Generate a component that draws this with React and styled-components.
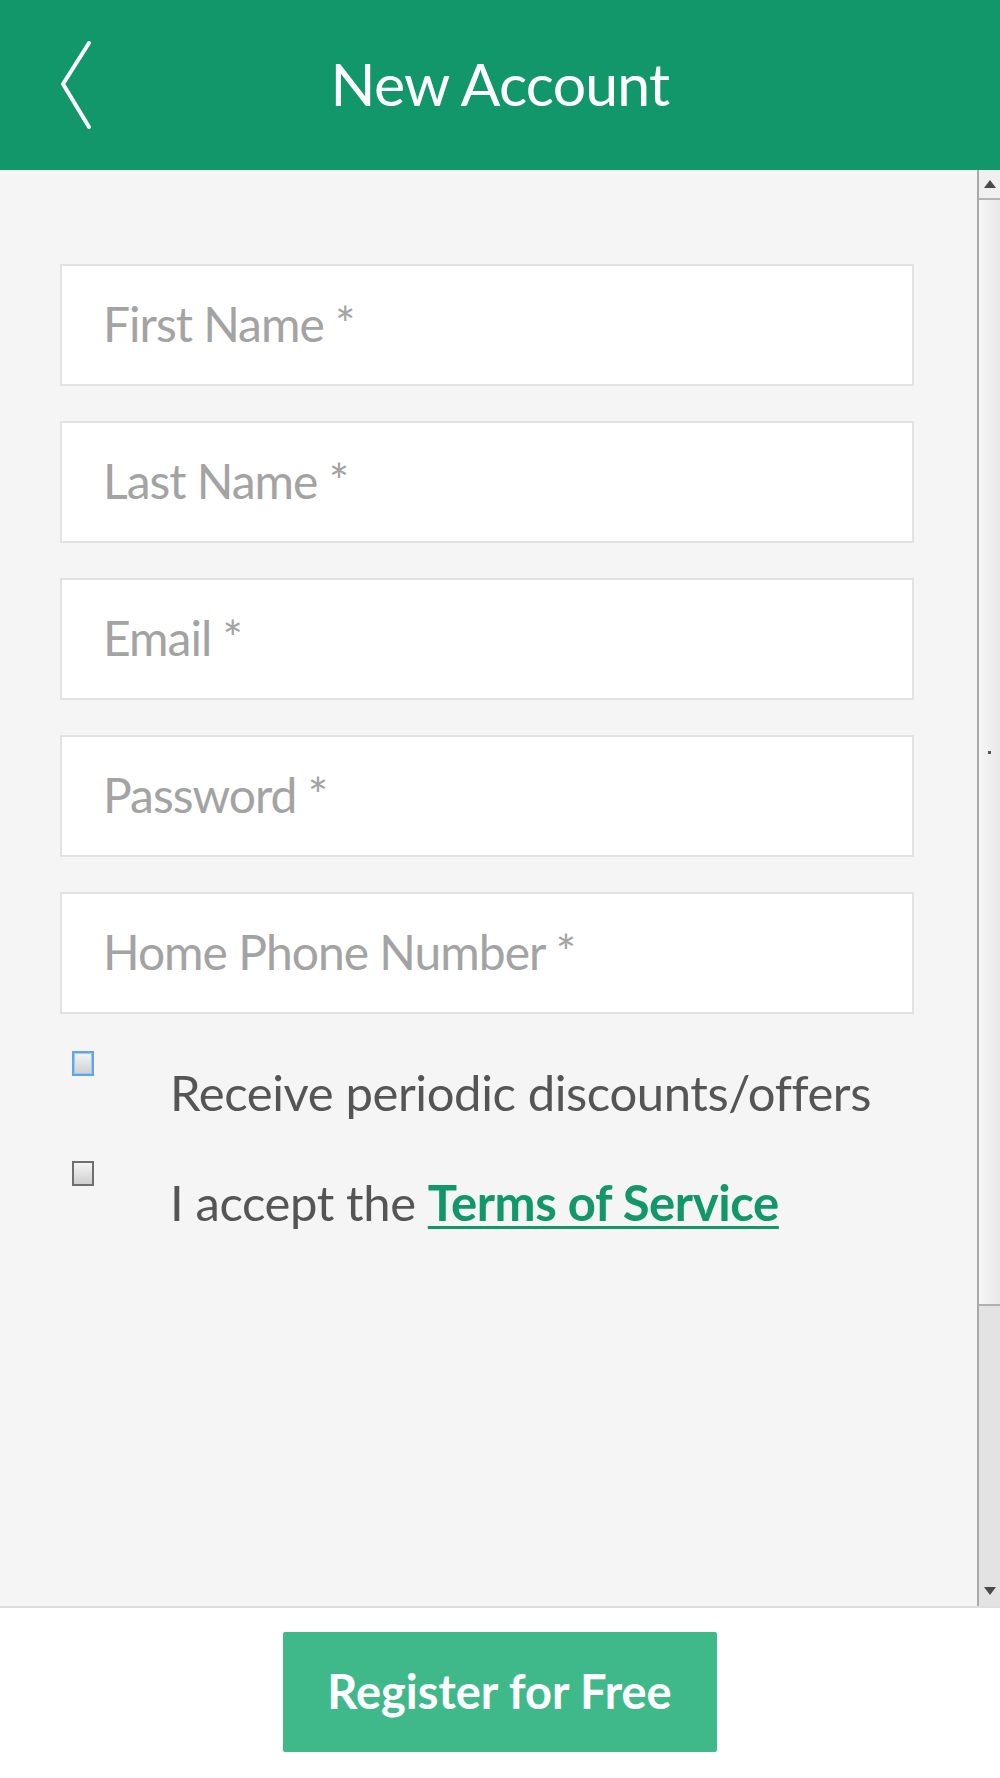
import styled, { createGlobalStyle } from "styled-components";

const GlobalStyle = createGlobalStyle`
    html, body {
        margin: 0;
        padding: 0;
        background: #ffffff;
    }
    * {
        box-sizing: border-box;
    }
`;

const fields = [
    "First Name *",
    "Last Name *",
    "Email *",
    "Password *",
    "Home Phone Number *",
];

export default function App() {
    return (
        <>
            <GlobalStyle />
            <Page>
                <Header>
                    <BackButton aria-label="Back">
                        <svg width="34" height="92" viewBox="0 0 34 92">
                            <polyline
                                points="30,3 4,44 30,87"
                                fill="none"
                                stroke="#ffffff"
                                strokeWidth="4"
                                strokeLinecap="round"
                                strokeLinejoin="round"
                            />
                        </svg>
                    </BackButton>
                    <Title>New Account</Title>
                </Header>

                <Body>
                    <Content>
                        <Form>
                            {fields.map((f) => (
                                <Field key={f} placeholder={f} />
                            ))}
                            <Options>
                                <Option>
                                    <Check $focused />
                                    <Label>Receive periodic discounts/offers</Label>
                                </Option>
                                <Option>
                                    <Check />
                                    <Label>
                                        I accept the <TermsLink href="#">Terms of Service</TermsLink>
                                    </Label>
                                </Option>
                            </Options>
                        </Form>
                    </Content>
                    <Scrollbar>
                        <ArrowButton>
                            <Arrow $up />
                        </ArrowButton>
                        <Thumb>
                            <Grip />
                        </Thumb>
                        <Track />
                        <ArrowButton $bottom>
                            <Arrow />
                        </ArrowButton>
                    </Scrollbar>
                </Body>

                <Footer>
                    <RegisterButton>Register for Free</RegisterButton>
                </Footer>
            </Page>
        </>
    );
}

const Page = styled.div`
    width: 1000px;
    height: 1778px;
    display: flex;
    flex-direction: column;
    font-family: Lato, "Open Sans", sans-serif;
`;

const Header = styled.header`
    height: 170px;
    flex-shrink: 0;
    background: #12976a;
    display: flex;
    align-items: center;
    justify-content: center;
    position: relative;
`;

const BackButton = styled.button`
    position: absolute;
    left: 59px;
    top: 40px;
    padding: 0;
    border: none;
    background: transparent;
    display: flex;
`;

const Title = styled.h1`
    margin: 0 0 4px 0;
    color: #ffffff;
    font-family: Lato, sans-serif;
    font-weight: 400;
    font-size: 59px;
    letter-spacing: -0.8px;
`;

const Body = styled.div`
    flex: 1;
    display: flex;
    background: #f5f5f5;
    border-bottom: 2px solid #dedede;
    min-height: 0;
`;

const Content = styled.div`
    flex: 1;
    padding: 94px 63px 0 60px;
`;

const Form = styled.div`
    display: flex;
    flex-direction: column;
    gap: 35px;
`;

const Field = styled.input`
    width: 100%;
    height: 122px;
    background: #ffffff;
    border: 2px solid #e2e2e2;
    padding: 0 0 4px 41px;
    font-family: Lato, sans-serif;
    font-size: 48px;
    letter-spacing: -1px;
    color: #555;
    outline: none;

    &::placeholder {
        color: #a3a3a3;
    }
`;

const Options = styled.div`
    display: flex;
    flex-direction: column;
    gap: 24px;
    margin-top: 2px;
`;

const Option = styled.label`
    display: flex;
    align-items: flex-start;
    height: 86px;
`;

const Check = styled.span`
    width: 22px;
    height: 25px;
    margin: 0 0 0 12px;
    flex-shrink: 0;
    border: 2px solid ${(p) => (p.$focused ? "#5fa6e8" : "#6f6f6f")};
    background: linear-gradient(#f4f4f4, #cfcfcf);
    box-shadow: ${(p) => (p.$focused ? "inset 0 0 0 1px #9cc9f2" : "none")};
`;

const Label = styled.span`
    margin-left: 76px;
    margin-top: 12px;
    font-family: Lato, sans-serif;
    font-size: 49px;
    letter-spacing: -0.4px;
    color: #555555;
    white-space: nowrap;
`;

const TermsLink = styled.a`
    color: #12976a;
    font-weight: 700;
    text-decoration: underline;
    text-decoration-thickness: 3px;
    text-underline-offset: 5px;
`;

const Scrollbar = styled.div`
    width: 23px;
    flex-shrink: 0;
    border-left: 2px solid #a9a9a9;
    background: #e3e3e3;
    display: flex;
    flex-direction: column;
`;

const ArrowButton = styled.div`
    height: 30px;
    flex-shrink: 0;
    display: flex;
    align-items: center;
    justify-content: center;
    background: ${(p) => (p.$bottom ? "#e3e3e3" : "#f0f0f0")};
    border-bottom: ${(p) => (p.$bottom ? "none" : "2px solid #b5b5b5")};
`;

const Arrow = styled.span`
    width: 0;
    height: 0;
    border-left: 6px solid transparent;
    border-right: 6px solid transparent;
    ${(p) =>
        p.$up
            ? "border-bottom: 8px solid #4a4a4a;"
            : "border-top: 8px solid #4a4a4a;"}
`;

const Thumb = styled.div`
    height: 1106px;
    flex-shrink: 0;
    background: linear-gradient(to right, #f5f5f5, #e9e9e9);
    border-bottom: 2px solid #b0b0b0;
    display: flex;
    align-items: center;
    justify-content: center;
`;

const Grip = styled.span`
    width: 3px;
    height: 3px;
    background: #555;
`;

const Track = styled.div`
    flex: 1;
`;

const Footer = styled.footer`
    height: 170px;
    flex-shrink: 0;
    background: #ffffff;
    display: flex;
    justify-content: center;
    padding-top: 24px;
`;

const RegisterButton = styled.button`
    width: 434px;
    height: 120px;
    margin-left: -1px;
    border: none;
    border-radius: 2px;
    background: #3fb98a;
    color: #ffffff;
    font-family: Lato, sans-serif;
    font-weight: 700;
    font-size: 47px;
    padding-bottom: 4px;
`;
